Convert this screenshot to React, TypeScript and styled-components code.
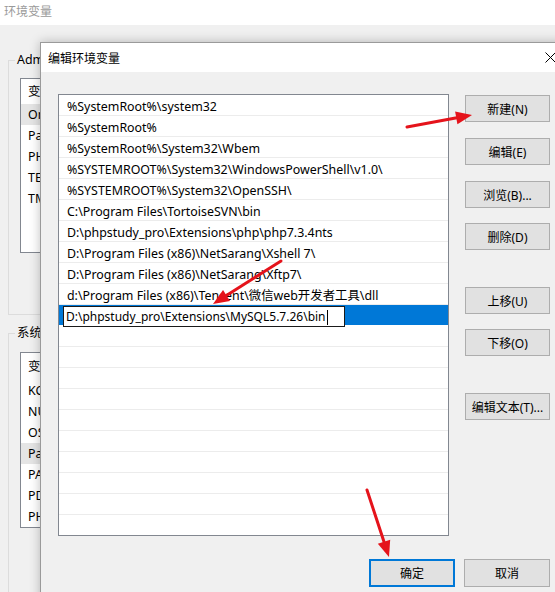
import React from "react";
import styled, { createGlobalStyle } from "styled-components";

const Global = createGlobalStyle`
  html, body { margin: 0; padding: 0; background: #f0f0f0; }
  body {
    font-family: "Noto Sans", "Noto Sans CJK SC", sans-serif;
    font-size: 12px;
    color: #000;
  }
  * { box-sizing: border-box; }
`;

const Screen = styled.div`
  position: relative;
  width: 555px;
  height: 592px;
  overflow: hidden;
  background: #f0f0f0;
  display: flex;
  flex-direction: column;
`;

/* ---------- background window ---------- */
const BgTitle = styled.div`
  height: 25px;
  flex-shrink: 0;
  background: #fff;
  padding-left: 4px;
  line-height: 21px;
  color: #9a9a9a;
  font-size: 12px;
  font-family: "Noto Sans CJK SC", sans-serif;
`;

const BgBody = styled.div`
  display: flex;
  flex-direction: column;
  gap: 10px;
  padding: 27px 0 0 8px;
`;

const Group = styled.fieldset<{ $h: number }>`
  margin: 0;
  width: 540px;
  height: ${(p) => p.$h}px;
  padding: 0 0 0 11px;
  border: 1px solid #dcdcdc;
  min-inline-size: 0;
`;

const GroupLabel = styled.legend`
  margin-left: -5px;
  padding: 0 2px;
  line-height: 16px;
  font-size: 12.4px;
  font-family: "Noto Sans", "Noto Sans CJK SC", sans-serif;
`;

const BgList = styled.div<{ $h: number; $top: number }>`
  margin-top: ${(p) => p.$top}px;
  height: ${(p) => p.$h}px;
  width: 500px;
  background: #fff;
  border: 1px solid #828790;
  display: flex;
  flex-direction: column;
`;

const BgHeader = styled.div<{ $h: number }>`
  height: ${(p) => p.$h}px;
  line-height: ${(p) => p.$h}px;
  padding-left: 7px;
  font-size: 12.4px;
  font-family: "Noto Sans CJK SC", sans-serif;
`;

const BgRow = styled.div<{ $sel?: boolean }>`
  height: 21px;
  line-height: 21px;
  padding-left: 7px;
  font-size: 12.4px;
  background: ${(p) => (p.$sel ? "#e5e5e5" : "transparent")};
`;

/* ---------- dialog ---------- */
const Dialog = styled.div`
  position: absolute;
  left: 40px;
  top: 42px;
  width: 534px;
  height: 560px;
  border: 1px solid #9a9a9a;
  background: #f0f0f0;
  box-shadow: 0 0 10px rgba(0, 0, 0, 0.25);
  display: flex;
  flex-direction: column;
`;

const TitleBar = styled.div`
  height: 29px;
  flex-shrink: 0;
  background: #fff;
  display: flex;
  align-items: center;
  justify-content: space-between;
  padding-left: 7px;
`;

const TitleText = styled.span`
  font-family: "Noto Sans CJK SC", sans-serif;
  font-size: 12px;
  color: #000;
`;

const CloseBox = styled.div`
  width: 46px;
  height: 29px;
  display: flex;
  align-items: center;
  justify-content: center;
`;

const DialogBody = styled.div`
  padding: 22px 0 0 17px;
  display: flex;
  flex-direction: column;
`;

const MainRow = styled.div`
  display: flex;
  gap: 16px;
`;

const PathList = styled.div`
  width: 391px;
  height: 442px;
  background: #fff;
  border: 1px solid #828790;
  overflow: hidden;
  display: flex;
  flex-direction: column;
`;

const PathRow = styled.div<{ $sel?: boolean }>`
  flex-shrink: 0;
  height: 21px;
  border-bottom: 1px solid #ececec;
  padding-left: 8px;
  line-height: 23px;
  white-space: nowrap;
  font-family: "Noto Sans", "Noto Sans CJK SC", sans-serif;
  font-size: 12.4px;
  display: flex;
  align-items: stretch;
  ${(p) =>
    p.$sel &&
    `
    background: #0078d7;
    padding-left: 4px;
    padding-top: 1px;
    border-bottom: 1px solid #fff;
    line-height: 20px;
  `}
`;

const EditBox = styled.div`
  width: 282px;
  height: 21px;
  background: #fff;
  border: 1px solid #1a1a1a;
  padding: 1px 0 0 2px;
  display: flex;
  align-items: center;
  font-size: 12px;
`;

const Caret = styled.span`
  display: inline-block;
  width: 1px;
  height: 15px;
  background: #000;
  margin-left: 1px;
`;

const ButtonColumn = styled.div`
  display: flex;
  flex-direction: column;
  padding-top: 1px;
`;

const WinButton = styled.button<{ $top?: number; $default?: boolean; $w?: number; $h?: number }>`
  margin: ${(p) => p.$top ?? 0}px 0 0 0;
  width: ${(p) => p.$w ?? 85}px;
  height: ${(p) => p.$h ?? 27}px;
  padding: 0;
  background: #e1e1e1;
  border: ${(p) => (p.$default ? "2px solid #0078d7" : "1px solid #adadad")};
  font-family: "Noto Sans", "Noto Sans CJK SC", sans-serif;
  font-size: 12px;
  color: #000;
  white-space: nowrap;
  cursor: default;
`;

const BottomRow = styled.div`
  width: 492px;
  margin-top: 23px;
  display: flex;
  justify-content: flex-end;
  gap: 9px;
`;

/* ---------- annotation overlay ---------- */
const Overlay = styled.svg`
  position: absolute;
  left: 0;
  top: 0;
  pointer-events: none;
`;

type Pt = [number, number];

function Arrow({ from, to }: { from: Pt; to: Pt }) {
  const dx = to[0] - from[0];
  const dy = to[1] - from[1];
  const len = Math.hypot(dx, dy);
  const ux = dx / len;
  const uy = dy / len;
  const hl = 16;
  const hw = 6.5;
  const bx = to[0] - ux * hl;
  const by = to[1] - uy * hl;
  const nx = -uy;
  const ny = ux;
  const pts = `${to[0]},${to[1]} ${bx + nx * hw},${by + ny * hw} ${bx - nx * hw},${by - ny * hw}`;
  return (
    <g>
      <line x1={from[0]} y1={from[1]} x2={bx + ux * 2} y2={by + uy * 2} stroke="#e5131b" strokeWidth={3} strokeLinecap="round" />
      <polygon points={pts} fill="#e5131b" />
    </g>
  );
}

const paths = [
  "%SystemRoot%\\system32",
  "%SystemRoot%",
  "%SystemRoot%\\System32\\Wbem",
  "%SYSTEMROOT%\\System32\\WindowsPowerShell\\v1.0\\",
  "%SYSTEMROOT%\\System32\\OpenSSH\\",
  "C:\\Program Files\\TortoiseSVN\\bin",
  "D:\\phpstudy_pro\\Extensions\\php\\php7.3.4nts",
  "D:\\Program Files (x86)\\NetSarang\\Xshell 7\\",
  "D:\\Program Files (x86)\\NetSarang\\Xftp7\\",
  "d:\\Program Files (x86)\\Tencent\\微信web开发者工具\\dll",
];

const userVars = ["OneDrive", "Path", "PHP_HOME", "TEMP", "TMP"];
const sysVars = ["KCEDITOR", "NUMBER_OF_PROCESSORS", "OS", "Path", "PATHEXT", "PDCONFIG", "PHP_PATH"];

export default function App() {
  const blanks = Array.from({ length: 11 });
  return (
    <>
      <Global />
      <Screen>
        <BgTitle>环境变量</BgTitle>
        <BgBody>
          <Group $h={263}>
            <GroupLabel>Administrator 的用户变量(U)</GroupLabel>
            <BgList $h={175} $top={10}>
              <BgHeader $h={25}>变量</BgHeader>
              {userVars.map((v, i) => (
                <BgRow key={v} $sel={i === 0}>
                  {v}
                </BgRow>
              ))}
            </BgList>
          </Group>
          <Group $h={270}>
            <GroupLabel>系统变量(S)</GroupLabel>
            <BgList $h={176} $top={11}>
              <BgHeader $h={27}>变量</BgHeader>
              {sysVars.map((v, i) => (
                <BgRow key={v} $sel={i === 3}>
                  {v}
                </BgRow>
              ))}
            </BgList>
          </Group>
        </BgBody>

        <Dialog>
          <TitleBar>
            <TitleText>编辑环境变量</TitleText>
            <CloseBox>
              <svg width="11" height="11" viewBox="0 0 11 11">
                <path d="M0.5 0.5 L10.5 10.5 M10.5 0.5 L0.5 10.5" stroke="#000" strokeWidth="1" fill="none" />
              </svg>
            </CloseBox>
          </TitleBar>
          <DialogBody>
            <MainRow>
              <PathList>
                {paths.map((p) => (
                  <PathRow key={p}>{p}</PathRow>
                ))}
                <PathRow $sel>
                  <EditBox>
                    D:\phpstudy_pro\Extensions\MySQL5.7.26\bin
                    <Caret />
                  </EditBox>
                </PathRow>
                {blanks.map((_, i) => (
                  <PathRow key={`b${i}`} />
                ))}
              </PathList>
              <ButtonColumn>
                <WinButton>新建(N)</WinButton>
                <WinButton $top={16}>编辑(E)</WinButton>
                <WinButton $top={16}>浏览(B)...</WinButton>
                <WinButton $top={15}>删除(D)</WinButton>
                <WinButton $top={37}>上移(U)</WinButton>
                <WinButton $top={15}>下移(O)</WinButton>
                <WinButton $top={37}>编辑文本(T)...</WinButton>
              </ButtonColumn>
            </MainRow>
            <BottomRow>
              <WinButton $default $w={86} $h={28}>
                确定
              </WinButton>
              <WinButton $w={86} $h={28}>
                取消
              </WinButton>
            </BottomRow>
          </DialogBody>
        </Dialog>

        <Overlay width={555} height={592} viewBox="0 0 555 592">
          <Arrow from={[407, 127]} to={[472, 115]} />
          <Arrow from={[281, 261]} to={[213, 304]} />
          <Arrow from={[367, 490]} to={[389, 557]} />
        </Overlay>
      </Screen>
    </>
  );
}
